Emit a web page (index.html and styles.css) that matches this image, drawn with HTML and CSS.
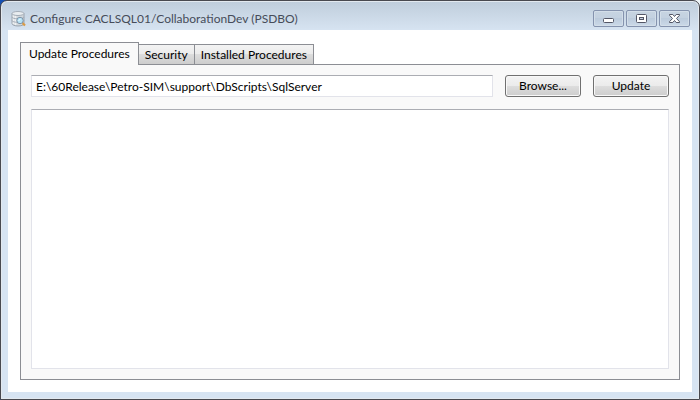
FILE: index.html
```
<!DOCTYPE html>
<html lang="en">
<head>
<meta charset="utf-8">
<title>Configure CACLSQL01/CollaborationDev (PSDBO)</title>
<link rel="stylesheet" href="styles.css">
</head>
<body>
<div class="window">
  <header class="titlebar">
    <svg class="app-icon" viewBox="0 0 16 16" aria-hidden="true">
      <path d="M1 2.500v10c0 3.300 12 3.300 12 0v-10z" fill="#d3d8dc" stroke="#9aa4af"/>
      <path d="M2.500 4v9M4.500 5v9" stroke="#eef1f3" stroke-width="1.500"/>
      <ellipse cx="7" cy="2.500" rx="6" ry="2" fill="#e9edf0" stroke="#a4adb8"/>
      <path d="M1 6c0 2.400 12 2.400 12 0M1 9.500c0 2.400 12 2.400 12 0" fill="none" stroke="#a4adb8"/>
      <path d="M11.500 12l2.500 2.500" stroke="#d89a45" stroke-width="2.200"/>
      <circle cx="9" cy="9.500" r="3.200" fill="#b5e2f5" stroke="#8094a8"/>
      <path d="M7.500 10l2-2.200" stroke="#f4fcff"/>
    </svg>
    <h1 class="title">Configure CACLSQL01/CollaborationDev (PSDBO)</h1>
    <div class="captions">
      <button class="caption" type="button" aria-label="Minimize">
        <svg viewBox="0 0 13 11"><rect x="1.500" y="5.500" width="10" height="4" rx="1" fill="#fff" stroke="#535666"/></svg>
      </button>
      <button class="caption" type="button" aria-label="Maximize">
        <svg viewBox="0 0 13 11"><rect x="1.500" y="1.500" width="10" height="8" rx="1" fill="#fff" stroke="#535666"/><rect x="4.500" y="4.500" width="4" height="2" fill="#c5d0df" stroke="#535666"/></svg>
      </button>
      <button class="caption" type="button" aria-label="Close">
        <svg viewBox="0 0 13 11"><path d="M1.500 1.500h3.300l1.700 2 1.700-2h3.300v.8L8.500 5.500l3 3.200v.8H8.200l-1.700-2-1.700 2H1.500v-.8l3-3.200-3-3.200z" fill="#fff" stroke="#535666"/></svg>
      </button>
    </div>
  </header>
  <main class="client">
    <div class="tabs" role="tablist">
      <button class="tab selected" type="button" role="tab" aria-selected="true" id="tab-update" aria-controls="panel">Update Procedures</button>
      <button class="tab" type="button" role="tab" aria-selected="false">Security</button>
      <button class="tab" type="button" role="tab" aria-selected="false">Installed Procedures</button>
    </div>
    <section class="panel" id="panel" role="tabpanel" aria-labelledby="tab-update">
      <div class="row">
        <input class="field path" type="text" aria-label="Scripts folder" value="E:\60Release\Petro-SIM\support\DbScripts\SqlServer">
        <button class="button" type="button">Browse...</button>
        <button class="button" type="button">Update</button>
      </div>
      <textarea class="field log" aria-label="Output"></textarea>
    </section>
  </main>
</div>
</body>
</html>
```
FILE: styles.css
```
* {
  box-sizing: border-box;
}

body {
  margin: 0;
  background: linear-gradient(90deg, #1450b4 50%, #eef4f8 50%);
  font-family: Lato, "Open Sans", sans-serif;
  font-size: 12px;
  line-height: 16px;
  color: #000;
}

button,
input,
textarea {
  margin: 0;
  font: inherit;
  color: inherit;
}

.window {
  display: flex;
  flex-direction: column;
  min-height: 100vh;
  padding: 0 7px 7px;
  border: 1px solid #49494f;
  border-radius: 7px 7px 0 0;
  background: linear-gradient(#bfcddb, #d7e4f2 30px);
  box-shadow: inset 0 0 0 1px #e3e9ef;
}

.titlebar {
  display: flex;
  align-items: center;
  height: 29px;
  padding: 6px 2px 0 3px;
}

.app-icon {
  width: 16px;
  height: 16px;
  margin-right: 3px;
}

.title {
  flex: 1;
  margin: 0;
  font-size: 12px;
  font-weight: 400;
  color: #464c59;
}

.captions {
  display: flex;
  gap: 2px;
}

.caption {
  display: flex;
  align-items: center;
  justify-content: center;
  width: 31px;
  height: 17px;
  padding: 0;
  border: 1px solid #8593ae;
  border-radius: 2px;
  background: linear-gradient(#c7d4e1, #c3d1e0 50%, #bccbdc 50%, #cbd9e8);
  box-shadow: inset 0 0 0 1px #d3dee9;
}

.caption svg {
  width: 13px;
  height: 11px;
}

.client {
  display: flex;
  flex: 1;
  flex-direction: column;
  padding: 12px;
  background: #fff;
}

.tabs {
  display: flex;
  align-items: flex-end;
  margin-bottom: -1px;
}

.tab {
  height: 21px;
  margin-left: -1px;
  padding: 0 6px;
  border: 1px solid #8c8e94;
  background: linear-gradient(#f3f3f3, #ebebeb 50%, #dddddd 50%, #cdcdcd);
  white-space: nowrap;
}

.tab.selected {
  z-index: 1;
  height: 23px;
  margin-left: 0;
  padding: 0 8px;
  border-bottom: 0;
  background: #f9f9f9;
}

.panel {
  display: flex;
  flex: 1;
  flex-direction: column;
  gap: 12px;
  padding: 10px;
  border: 1px solid #8c8e94;
  background: #f9f9f9;
}

.row {
  display: flex;
  gap: 12px;
}

.field {
  border: 1px solid #e2e3ea;
  border-top-color: #abadb3;
  background: #fff;
  outline: 0;
}

.path {
  flex: 1;
  min-width: 0;
  height: 22px;
  padding: 0 4px;
}

.button {
  width: 76px;
  height: 22px;
  padding: 0;
  border: 1px solid #707070;
  border-radius: 3px;
  background: linear-gradient(#f3f3f3, #ebebeb 50%, #dddddd 50%, #cdcdcd);
  box-shadow: inset 0 0 0 1px #f8f8f8;
}

.log {
  flex: 1;
  resize: none;
}
```
